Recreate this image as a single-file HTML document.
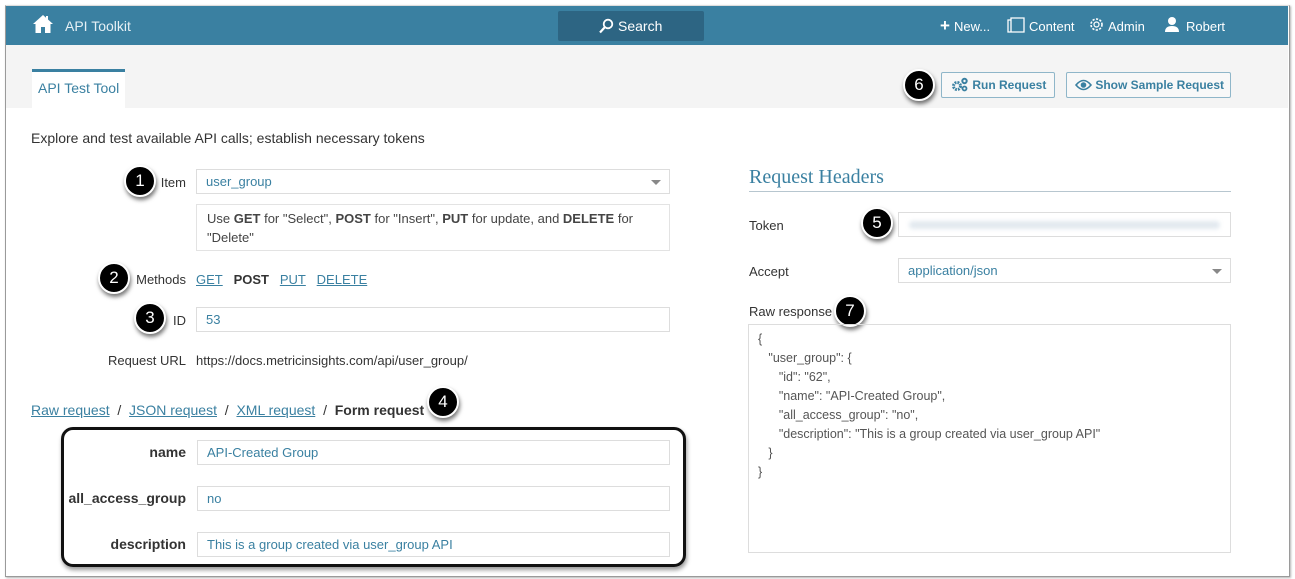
<!DOCTYPE html>
<html><head><meta charset="utf-8"><style>
*{box-sizing:border-box;margin:0;padding:0}
body{width:1295px;height:579px;background:#fff;font-family:"Liberation Sans",sans-serif;font-size:13px;color:#333;position:relative;overflow:hidden}
.a{position:absolute}
#frame{left:5px;top:5px;width:1285px;height:572px;border:1px solid #9a9a9a;border-top-color:#ddd;box-shadow:1px 1px 2px rgba(0,0,0,.3)}
#hdr{left:6px;top:6px;width:1282px;height:39px;background:#3a80a1;color:#fff}
#band{left:6px;top:45px;width:1282px;height:63px;background:#f4f4f4}
.inp{position:absolute;border:1px solid #ddd;background:#fff;height:25px;padding-left:9px;line-height:23px;color:#3a80a1;font-size:13px}
.lbl{position:absolute;text-align:right;width:150px}
.b{font-weight:bold;font-size:14px}
.lnk{color:#3a80a1;text-decoration:underline}
.bad{position:absolute;width:32px;height:32px;border-radius:50%;background:#000;border:2px solid #fff;box-shadow:1px 3px 4px rgba(0,0,0,.55);color:#fff;font-size:17px;text-align:center;line-height:28px}
.btn{position:absolute;top:72px;height:26px;border:1px solid #8fb6c9;border-radius:2px;color:#3a80a1;font-weight:bold;font-size:12px;line-height:24px;background:#f8f8f8}
.caret{position:absolute;right:8px;top:10px;width:0;height:0;border-left:5px solid transparent;border-right:5px solid transparent;border-top:5px solid #888}
</style></head><body>
<div class="a" id="frame"></div>
<div class="a" id="hdr">
 <svg class="a" style="left:26px;top:8px" width="22" height="20" viewBox="0 0 22 20"><path d="M11 1 L1 10 L3.5 10 L3.5 19 L9 19 L9 13 L13 13 L13 19 L18.5 19 L18.5 10 L21 10 L16 5.5 L16 2 L14 2 L14 3.7 Z" fill="#fff"/></svg>
 <div class="a" style="left:59px;top:12px;font-size:14px;color:#e6f0f5">API Toolkit</div>
 <div class="a" style="left:552px;top:5px;width:146px;height:30px;background:#2d6583;border-radius:2px"></div>
 <svg class="a" style="left:592px;top:12px" width="16" height="16" viewBox="0 0 16 16"><circle cx="10" cy="6" r="4.3" fill="none" stroke="#fff" stroke-width="1.8"/><path d="M7 9 L2 14.5" stroke="#fff" stroke-width="2.2"/></svg>
 <div class="a" style="left:612px;top:12px;font-size:14px">Search</div>
 <div class="a" style="left:934px;top:10px;font-size:17px;font-weight:bold">+</div>
 <div class="a" style="left:948px;top:13px;font-size:13px">New...</div>
 <svg class="a" style="left:1001px;top:11px" width="18" height="16" viewBox="0 0 18 16"><path d="M1 3 H4 V1 H17 V15 H1 Z M4 3 V15" fill="none" stroke="#fff" stroke-width="1.3"/></svg>
 <div class="a" style="left:1023px;top:13px">Content</div>
 <svg class="a" style="left:1082px;top:10px" width="17" height="17" viewBox="0 0 17 17"><circle cx="8.5" cy="8.5" r="5.5" fill="none" stroke="#fff" stroke-width="1.6" stroke-dasharray="2.2 1.4"/><circle cx="8.5" cy="8.5" r="2.5" fill="none" stroke="#fff" stroke-width="1.2"/></svg>
 <div class="a" style="left:1102px;top:13px">Admin</div>
 <svg class="a" style="left:1158px;top:10px" width="16" height="17" viewBox="0 0 16 17"><circle cx="8" cy="5" r="4" fill="#fff"/><path d="M1 16 Q1 10 8 10 Q15 10 15 16 Z" fill="#fff"/></svg>
 <div class="a" style="left:1180px;top:13px">Robert</div>
</div>
<div class="a" id="band"></div>
<div class="a" style="left:32px;top:69px;width:93px;height:39px;background:#fff;border-top:3px solid #3a80a1"></div>
<div class="a" style="left:38px;top:80px;font-size:14px;color:#3a80a1">API Test Tool</div>
<div class="btn" style="left:941px;width:114px;padding-left:9px"><svg style="vertical-align:-3px" width="18" height="15" viewBox="0 0 18 15"><circle cx="6" cy="9" r="3.5" fill="none" stroke="#3a80a1" stroke-width="3" stroke-dasharray="1.8 1"/><circle cx="13.5" cy="4" r="2.2" fill="none" stroke="#3a80a1" stroke-width="2"/><circle cx="13.5" cy="11.5" r="2" fill="none" stroke="#3a80a1" stroke-width="1.8"/></svg> Run Request</div>
<div class="btn" style="left:1066px;width:165px;padding-left:8px"><svg style="vertical-align:-2px" width="17" height="12" viewBox="0 0 17 12"><path d="M1 6 Q8.5 -3 16 6 Q8.5 15 1 6 Z" fill="none" stroke="#3a80a1" stroke-width="1.6"/><circle cx="8.5" cy="6" r="2.8" fill="#3a80a1"/></svg> Show Sample Request</div>
<div class="bad" style="left:903px;top:69px">6</div>

<div class="a" style="left:31px;top:130px;font-size:14px">Explore and test available API calls; establish necessary tokens</div>

<div class="lbl" style="left:36px;top:175px">Item</div>
<div class="inp" style="left:196px;top:169px;width:474px">user_group<div class="caret"></div></div>
<div class="bad" style="left:124px;top:165px">1</div>
<div class="a" style="left:196px;top:204px;width:474px;height:47px;border:1px solid #e3e3e3;padding:4px 10px;line-height:19px;color:#444">Use <b>GET</b> for "Select", <b>POST</b> for "Insert", <b>PUT</b> for update, and <b>DELETE</b> for "Delete"</div>
<div class="lbl" style="left:36px;top:272px">Methods</div>
<div class="a" style="left:196px;top:272px"><span class="lnk">GET</span>&nbsp;&nbsp; <b>POST</b>&nbsp;&nbsp; <span class="lnk">PUT</span>&nbsp;&nbsp; <span class="lnk">DELETE</span></div>
<div class="bad" style="left:98px;top:262px">2</div>
<div class="lbl" style="left:36px;top:313px">ID</div>
<div class="inp" style="left:196px;top:307px;width:474px">53</div>
<div class="bad" style="left:134px;top:302px">3</div>
<div class="lbl" style="left:36px;top:353px">Request URL</div>
<div class="a" style="left:196px;top:353px">https://docs.metricinsights.com/api/user_group/</div>
<div class="a" style="left:31px;top:402px;font-size:14px"><span class="lnk">Raw request</span> &nbsp;/ &nbsp;<span class="lnk">JSON request</span> &nbsp;/ &nbsp;<span class="lnk">XML request</span> &nbsp;/ &nbsp;<b>Form request</b></div>
<div class="bad" style="left:427px;top:386px">4</div>
<div class="a" style="left:61px;top:427px;width:625px;height:140px;border:3px solid #111;border-radius:12px;box-shadow:1px 3px 4px rgba(0,0,0,.4)"></div>
<div class="lbl b" style="left:36px;top:444px">name</div>
<div class="inp" style="left:197px;top:440px;width:473px">API-Created Group</div>
<div class="lbl b" style="left:36px;top:490px">all_access_group</div>
<div class="inp" style="left:197px;top:486px;width:473px">no</div>
<div class="lbl b" style="left:36px;top:536px">description</div>
<div class="inp" style="left:197px;top:532px;width:473px">This is a group created via user_group API</div>

<div class="a" style="left:749px;top:165px;width:482px;height:27px;border-bottom:1px solid #b7c6cf;font-family:'Liberation Serif',serif;font-size:20px;color:#3a80a1;padding-top:1px">Request Headers</div>
<div class="a" style="left:749px;top:218px">Token</div>
<div class="inp" style="left:898px;top:212px;width:333px"><div style="position:absolute;left:10px;right:10px;top:8px;height:8px;background:#e2e9ef;filter:blur(2px);border-radius:4px"></div></div>
<div class="bad" style="left:861px;top:207px">5</div>
<div class="a" style="left:749px;top:264px">Accept</div>
<div class="inp" style="left:898px;top:258px;width:333px">application/json<div class="caret"></div></div>
<div class="a" style="left:749px;top:304px">Raw response</div>
<div class="bad" style="left:834px;top:295px">7</div>
<div class="a" style="left:748px;top:324px;width:483px;height:229px;border:1px solid #ddd;padding:5px 9px;line-height:19px;color:#555;white-space:pre;font-size:12.5px">{
   "user_group": {
      "id": "62",
      "name": "API-Created Group",
      "all_access_group": "no",
      "description": "This is a group created via user_group API"
   }
}</div>
</body></html>
